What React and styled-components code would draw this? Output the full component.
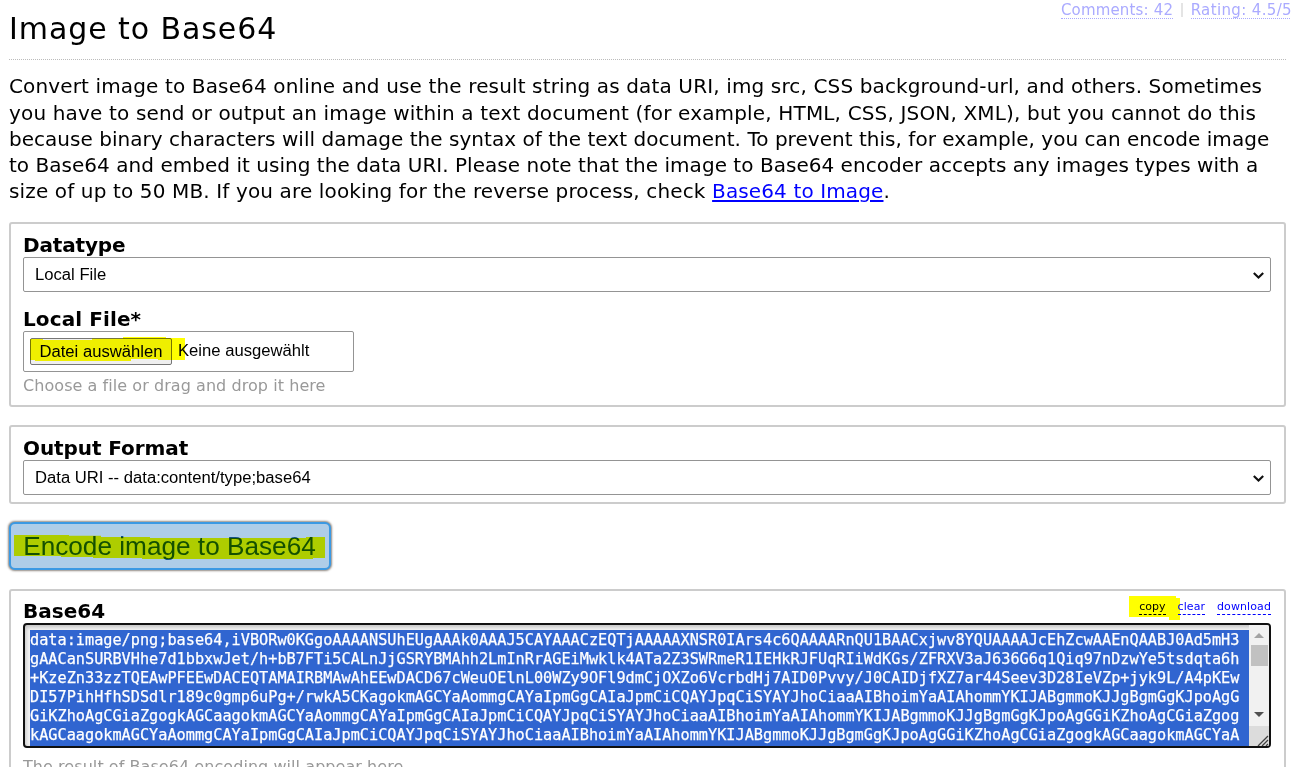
import React from "react";
import styled, { createGlobalStyle, css } from "styled-components";

const verdana = `Verdana, "DejaVu Sans", sans-serif`;
const arial = `"Liberation Sans", Arial, sans-serif`;
const mono = `"DejaVu Sans Mono", monospace`;

const GlobalStyle = createGlobalStyle`
  * { box-sizing: border-box; }
  html, body { height: 100%; }
  body {
    margin: 0;
    overflow: hidden;
    background: #fff;
    color: #000;
    font-family: ${verdana};
  }
`;

const Page = styled.main`
  display: flex;
  flex-direction: column;
  align-items: flex-start;
  width: 1277px;
  height: 767px;
  margin-left: 9px;
`;

const Header = styled.header`
  display: flex;
  justify-content: space-between;
  align-items: flex-start;
  flex: none;
  width: 100%;
  height: 60px;
  border-bottom: 1px dotted #bbb;
`;

const Title = styled.h1`
  margin: 10px 0 0;
  font-size: 30px;
  font-weight: 400;
  line-height: 37px;
  letter-spacing: 0.92px;
  white-space: nowrap;
`;

const Meta = styled.nav`
  display: flex;
  margin-right: -6px;
`;

const MetaLink = styled.a`
  height: 19px;
  border-bottom: 1px dotted #aaf;
  color: #aaf;
  font-size: 15px;
  line-height: 20px;
  letter-spacing: ${(p) => p.$spacing}px;
  white-space: nowrap;
`;

const MetaDivider = styled.span`
  width: 1.5px;
  height: 14px;
  margin: 3px 8px 0;
  background: #e4e4e4;
`;

const Intro = styled.p`
  flex: none;
  margin: 13.25px 0 17.5px;
  font-size: 20px;
  line-height: 26.25px;
  white-space: nowrap;
`;

const IntroLine = styled.span`
  display: block;
  letter-spacing: ${(p) => p.$spacing}px;
`;

const TextLink = styled.a`
  color: #00f;
  letter-spacing: 0.12px;
  text-decoration: underline;
  text-decoration-thickness: 2px;
  text-underline-offset: 2px;
`;

const Panel = styled.section`
  display: flex;
  flex-direction: column;
  align-items: stretch;
  flex: none;
  width: 100%;
  height: ${(p) => p.$height}px;
  margin-bottom: ${(p) => p.$gap}px;
  padding: 7px 13px 0 12px;
  border: 2px solid #ccc;
  border-radius: 3px;
`;

const FieldHead = styled.div`
  display: flex;
  justify-content: space-between;
  flex: none;
  height: ${(p) => p.$height || 26}px;
`;

const Label = styled.label`
  font-size: 20px;
  font-weight: 700;
  line-height: ${(p) => p.$line || 28}px;
  letter-spacing: ${(p) => p.$spacing || 0}px;
  white-space: nowrap;
`;

const fieldBox = css`
  display: flex;
  align-items: center;
  flex: none;
  border: 1px solid #949494;
  border-radius: 2px;
  background: #fff;
  font-family: ${arial};
  font-size: 16.65px;
`;

const Select = styled.div`
  ${fieldBox}
  justify-content: space-between;
  height: 35px;
  margin-bottom: ${(p) => p.$gap || 0}px;
  padding: 1px 5px 0 11px;
`;

const FileInput = styled.div`
  ${fieldBox}
  width: 331px;
  height: 41px;
  padding: 0 6px;
  gap: 6px;
`;

const FileButton = styled.button`
  width: 142px;
  height: 27px;
  padding: 0;
  border: 1px solid #767676;
  border-radius: 2px;
  background: #efefef;
  font: 16.65px/25px ${arial};
`;

const FileStatus = styled.span`
  padding-bottom: 2px;
`;

const Hint = styled.p`
  margin: ${(p) => p.$top}px 0 0;
  color: #999;
  font-size: 16px;
  line-height: 20px;
  letter-spacing: 0.06px;
  white-space: nowrap;
`;

const Marked = styled.div`
  position: relative;
  display: flex;
  flex: none;
`;

const Marker = styled.svg`
  position: absolute;
  left: ${(p) => p.$x}px;
  top: ${(p) => p.$y}px;
  fill: #ff0;
  mix-blend-mode: multiply;
  pointer-events: none;
`;

const EncodeButton = styled.button`
  width: 322px;
  height: 48px;
  margin: 0 0 19px;
  padding: 0 1px 0 0;
  border: 2px solid #3b99e3;
  border-radius: 6px;
  background: #aecde8;
  box-shadow: 0 0 2px 0.5px rgba(70, 60, 50, 0.6);
  color: #145087;
  font: 26.2px/44px ${arial};
  white-space: nowrap;
`;

const Actions = styled.div`
  display: flex;
  gap: 12px;
  height: 17px;
`;

const Action = styled.a`
  position: relative;
  height: 17px;
  border-bottom: 1px dashed #00f;
  color: #00f;
  font-size: 11px;
  line-height: 18px;
  letter-spacing: ${(p) => p.$spacing}px;
`;

const Output = styled.div`
  display: flex;
  flex: none;
  height: 125px;
  border: 2px solid #101010;
  border-radius: 4px;
  background: #f4f4f4;
  box-shadow: inset 1px 2px 4px rgba(0, 0, 0, 0.22);
  overflow: hidden;
`;

const Selection = styled.div`
  flex: 1;
  margin: 5px 0 0 5px;
  padding-top: 1px;
  background: #3065d0;
  color: #fff;
  font: 15.22px/19px ${mono};
  -webkit-text-stroke: 0.25px #fff;
  white-space: pre;
  overflow: hidden;
`;

const Row = styled.div`
  height: 19px;
`;

const ScrollBar = styled.div`
  display: flex;
  flex-direction: column;
  width: 20px;
  background: #f1f1f1;
`;

const Thumb = styled.div`
  width: 17px;
  height: 21px;
  margin-left: 2px;
  background: #c1c1c1;
`;

const ScrollArrow = styled.svg`
  display: block;
  margin: ${(p) => p.$margin};
  fill: ${(p) => p.$color};
`;

const ResizeCorner = styled.svg`
  display: block;
  background: #dcdcdc;
  fill: none;
  stroke: #404040;
  stroke-width: 1.3;
`;

const intro = [
  [0.137, "Convert image to Base64 online and use the result string as data URI, img src, CSS background-url, and others. Sometimes"],
  [0.159, "you have to send or output an image within a text document (for example, HTML, CSS, JSON, XML), but you cannot do this"],
  [0.03, "because binary characters will damage the syntax of the text document. To prevent this, for example, you can encode image"],
  [0.032, "to Base64 and embed it using the data URI. Please note that the image to Base64 encoder accepts any images types with a"],
];

const rows = [
  "data:image/png;base64,iVBORw0KGgoAAAANSUhEUgAAAk0AAAJ5CAYAAACzEQTjAAAAAXNSR0IArs4c6QAAAARnQU1BAACxjwv8YQUAAAAJcEhZcwAAEnQAABJ0Ad5mH3",
  "gAACanSURBVHhe7d1bbxwJet/h+bB7FTi5CALnJjGSRYBMAhh2LmInRrAGEiMwklk4ATa2Z3SWRmeR1IEHkRJFUqRIiWdKGs/ZFRXV3aJ636G6q1Qiq97nDzwYe5tsdqta6h",
  "+KzeZn33zzTQEAwPFEEwDACEQTAMAIRBMAwAhEEwDACD67cWeuOElnL00WZy9OFl9dmCjOXZo6VcrbdHj7AID0Pvvy/J0CAIDjfXZ7ar44Seev3D28IeVZp+jyk9L/A4pKEw",
  "DI57PihHfhSDSdlr189c0gmp6uPg+/rwkA5CKagokmAGCYaAommgCAYaIpmGgCAIaJpmCiCQAYJpqCiSYAYJhoCiaaAIBhoimYaAIAhommYKIJABgmmoKJJgBgmGgKJpoAgG",
  "GiKZhoAgCGiaZgogkAGCaagokmAGCYaAommgCAYaIpmGgCAIaJpmCiCQAYJpqCiSYAYJhoCiaaAIBhoimYaAIAhommYKIJABgmmoKJJgBgmGgKJpoAgGGiKZhoAgCGiaZgog",
  "kAGCaagokmAGCYaAommgCAYaIpmGgCAIaJpmCiCQAYJpqCiSYAYJhoCiaaAIBhoimYaAIAhommYKIJABgmmoKJJgBgmGgKJpoAgGGiKZhoAgCGiaZgogkAGCaagokmAGCYaA",
];

const Chevron = () => (
  <svg width="13" height="9" viewBox="0 0 13 9" fill="none" stroke="#101010" strokeWidth="2.1">
    <path d="M1.8 1.9 6.5 6.6 11.2 1.9" />
  </svg>
);

export default function App() {
  return (
    <>
      <GlobalStyle />
      <Page>
        <Header>
          <Title>Image to Base64</Title>
          <Meta>
            <MetaLink $spacing={0.17}>Comments: 42</MetaLink>
            <MetaDivider />
            <MetaLink $spacing={0.36}>Rating: 4.5/5</MetaLink>
          </Meta>
        </Header>

        <Intro>
          {intro.map(([spacing, text]) => (
            <IntroLine key={text} $spacing={spacing}>{text}</IntroLine>
          ))}
          <IntroLine $spacing={0.135}>
            size of up to 50 MB. If you are looking for the reverse process, check{" "}
            <TextLink>Base64 to Image</TextLink>.
          </IntroLine>
        </Intro>

        <Panel $height={185} $gap={18}>
          <FieldHead><Label $spacing={-0.15}>Datatype</Label></FieldHead>
          <Select $gap={13}>Local File<Chevron /></Select>
          <FieldHead><Label $spacing={0.1}>Local File*</Label></FieldHead>
          <Marked>
            <FileInput>
              <FileButton>Datei auswählen</FileButton>
              <FileStatus>Keine ausgewählt</FileStatus>
            </FileInput>
            <Marker $x={7} $y={6} width="155" height="25">
              <path d="M0 2H13V3H62V1.5H93V0H136V1H155V23H128V22H101V24H5V23H0Z" />
            </Marker>
          </Marked>
          <Hint $top={4}>Choose a file or drag and drop it here</Hint>
        </Panel>

        <Panel $height={79} $gap={18}>
          <FieldHead><Label $spacing={-0.08}>Output Format</Label></FieldHead>
          <Select>Data URI -- data:content/type;base64<Chevron /></Select>
        </Panel>

        <Marked>
          <EncodeButton>Encode image to Base64</EncodeButton>
          <Marker $x={5} $y={13} width="311" height="25">
            <path d="M0 0H55V0.7H87V2H136V3H292V2H311V23H299V24H128V23H79V22H47V21H0Z" />
          </Marker>
        </Marked>

        <Panel $height={200} $gap={0}>
          <FieldHead $height={25}>
            <Label $line={27}>Base64</Label>
            <Actions>
              <Action $spacing={0.05}>
                copy
                <Marker $x={-10} $y={-2} width="51" height="24">
                  <path d="M0 0H47V2H51V24H40V21H0Z" />
                </Marker>
              </Action>
              <Action $spacing={0.05}>clear</Action>
              <Action $spacing={0.1}>download</Action>
            </Actions>
          </FieldHead>
          <Output>
            <Selection>
              {rows.map((row) => <Row key={row}>{row}</Row>)}
            </Selection>
            <ScrollBar>
              <ScrollArrow $margin="8px 0 7px 5px" $color="#a3a3a3" width="10" height="5">
                <path d="M0 5 5 0 10 5Z" />
              </ScrollArrow>
              <Thumb />
              <ScrollArrow $margin="46px 0 9px 5px" $color="#505050" width="10" height="5">
                <path d="M0 0H10L5 5Z" />
              </ScrollArrow>
              <ResizeCorner width="20" height="20">
                <path d="M9 20 19 10M13 20 19 14M17 20 19 18" />
              </ResizeCorner>
            </ScrollBar>
          </Output>
          <Hint $top={9}>The result of Base64 encoding will appear here</Hint>
        </Panel>
      </Page>
    </>
  );
}
